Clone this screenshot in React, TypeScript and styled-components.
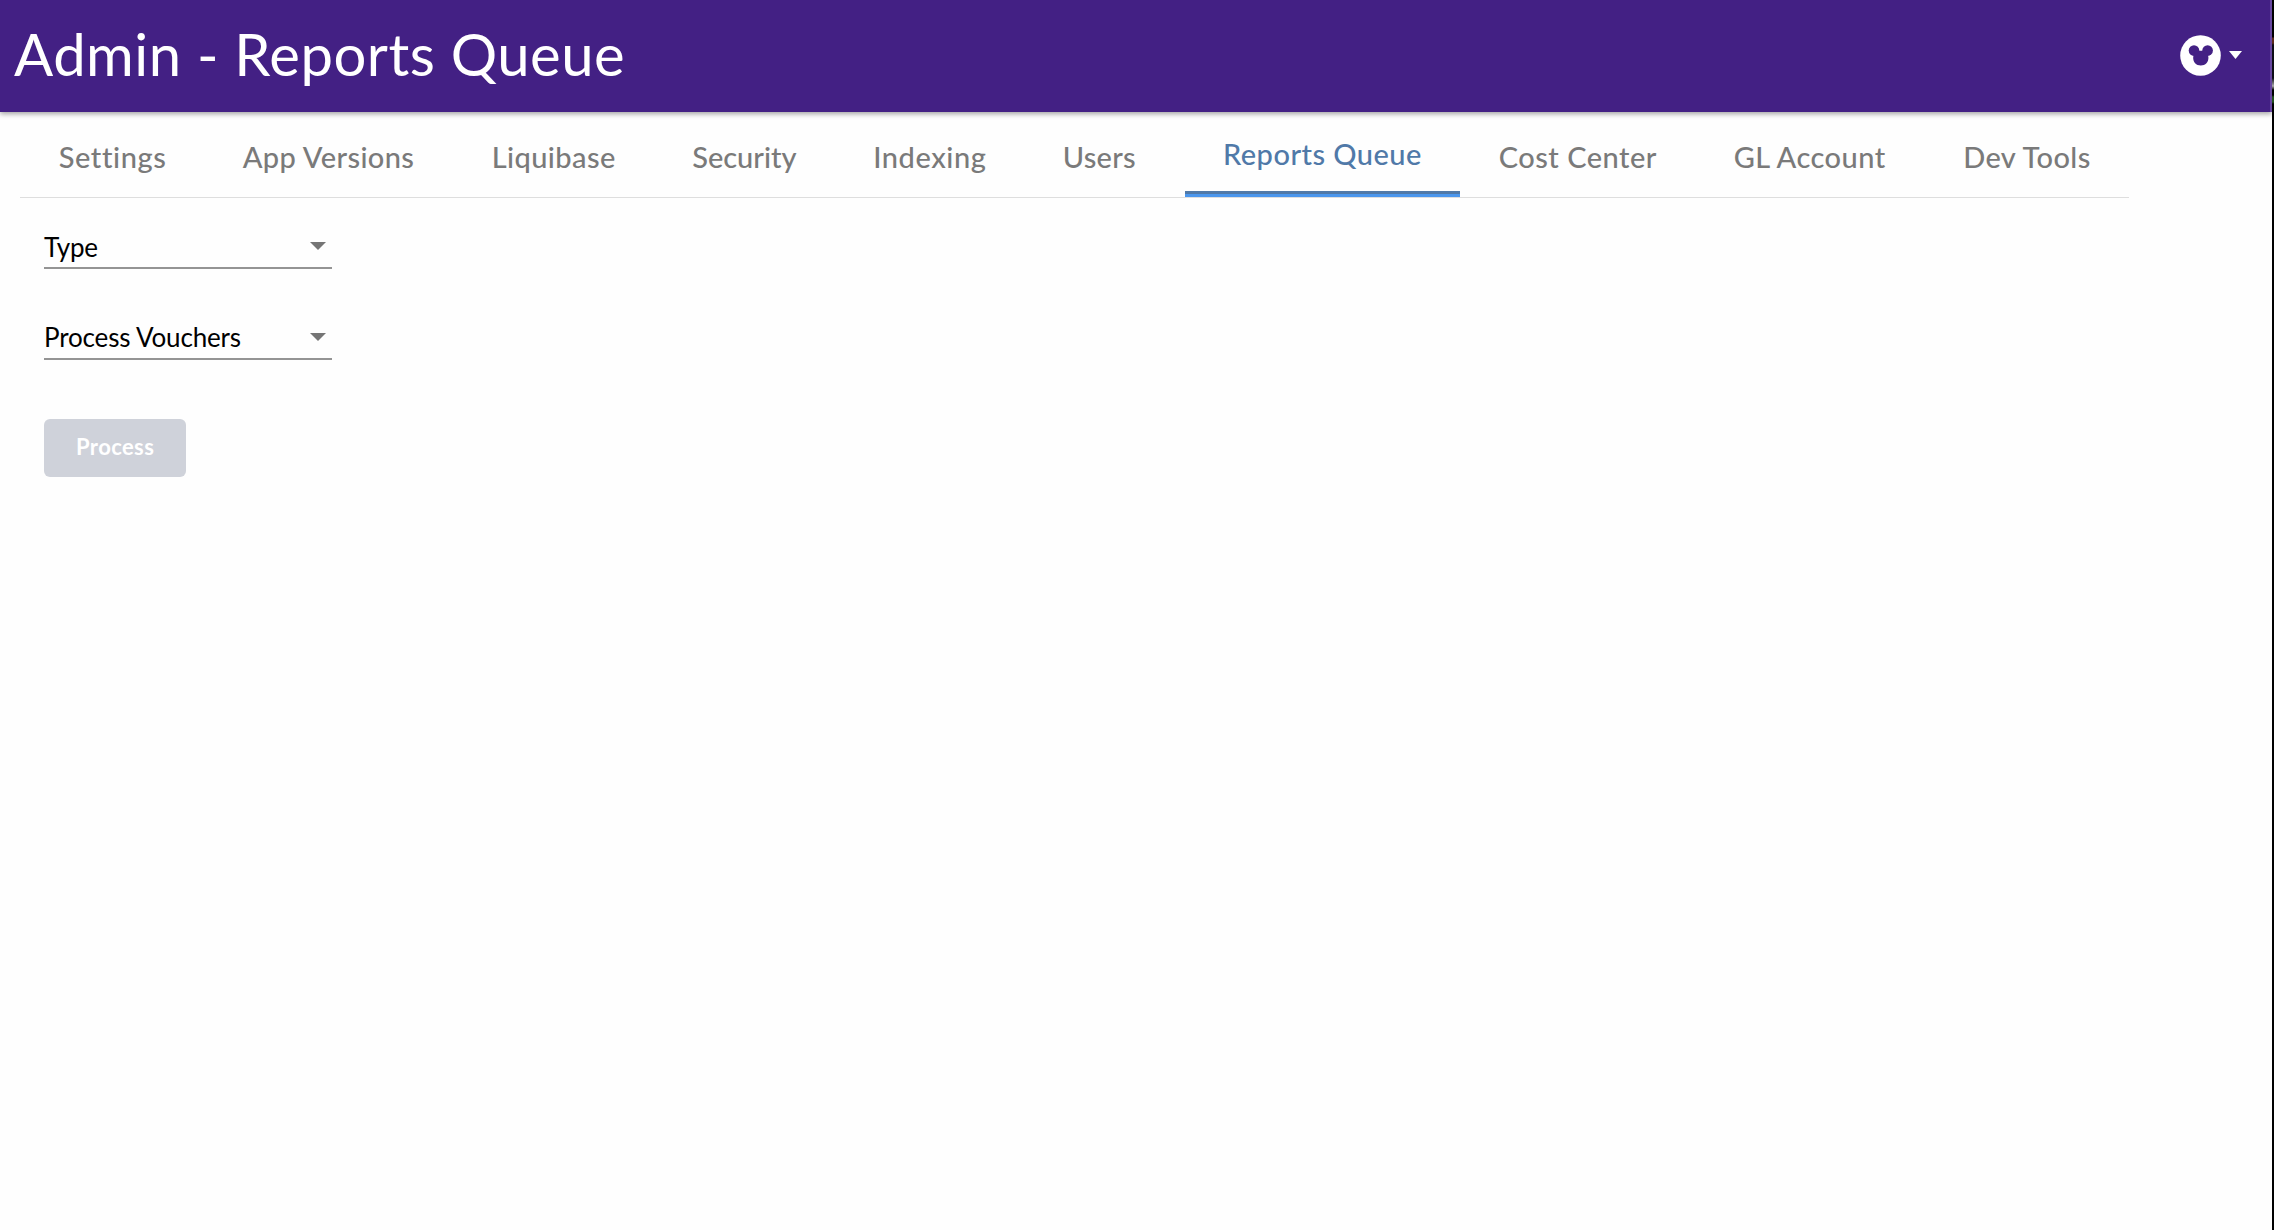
import React from "react";
import styled, { createGlobalStyle } from "styled-components";

const GlobalStyle = createGlobalStyle`
  * { box-sizing: border-box; }
  body {
    margin: 0;
    background: #fefefe;
    font-family: Lato, "Liberation Sans", sans-serif;
    overflow: hidden;
  }
`;

const Screen = styled.div`
  display: flex;
  height: 1230px;
  width: 2274px;
`;

const Page = styled.div`
  flex: 1;
  display: flex;
  flex-direction: column;
`;

const WindowEdge = styled.div`
  width: 2px;
  background: linear-gradient(#000 0 37px, #5d2a1c 38px 43px, #0d0d16 45px 78px, #aaa 86px, #000 90px 95px, #24501f 97px 102px, #000 104px);
`;

const Header = styled.header`
  display: flex;
  justify-content: space-between;
  height: 112px;
  padding: 0 28px 0 14px;
  background: #432084;
  box-shadow: 0 2px 5px rgba(0, 0, 0, 0.36);
  border-right: 2px solid #6747a0;
`;

const Title = styled.h1`
  margin: 0;
  color: #fff;
  font-size: 58px;
  font-weight: 400;
  line-height: 107px;
  letter-spacing: 0.5px;
`;

const UserMenu = styled.button`
  display: flex;
  align-items: center;
  gap: 8px;
  height: 40px;
  margin: 35px 0 0;
  padding: 0;
  border: 0;
  background: none;
`;

const Caret = styled.svg<{ $color: string }>`
  display: block;
  flex: none;
  fill: ${(p) => p.$color};
`;

const Tabs = styled.nav`
  display: flex;
  width: 2109px;
  height: 86px;
  margin-left: 20px;
  border-bottom: 1px solid #dedede;
`;

const Tab = styled.a<{ $width: number; $spacing: number; $active?: boolean }>`
  flex: none;
  width: ${(p) => p.$width}px;
  height: 85px;
  padding-left: ${(p) => (p.$active ? 38 : 38.7)}px;
  font-size: 29px;
  font-weight: 500;
  line-height: ${(p) => (p.$active ? 83 : 90)}px;
  letter-spacing: ${(p) => p.$spacing}px;
  white-space: nowrap;
  color: ${(p) => (p.$active ? "#5079a8" : "#7a7a7a")};
  background: ${(p) =>
    p.$active
      ? "linear-gradient(transparent 79px, #5079a8 79px 82px, #4b96ec 82px)"
      : "none"};
`;

const Form = styled.main`
  display: flex;
  flex-direction: column;
  align-items: flex-start;
  padding: 27px 44px;
`;

const Select = styled.div<{ $line: number; $spacing: number }>`
  display: flex;
  justify-content: space-between;
  width: 288px;
  height: 44px;
  margin-bottom: 47px;
  padding-right: 6px;
  border-bottom: 2px solid #949494;
  color: #000;
  font-size: 26px;
  line-height: ${(p) => p.$line}px;
  letter-spacing: ${(p) => p.$spacing}px;

  svg {
    margin-top: 17px;
  }
`;

const ProcessButton = styled.button`
  width: 142px;
  height: 58px;
  margin-top: 12px;
  padding: 0 0 3px 32px;
  border: 0;
  border-radius: 6px;
  background: #cfd2da;
  color: #fff;
  font: 700 22px/55px Lato, "Liberation Sans", sans-serif;
  letter-spacing: 0.4px;
  text-align: left;
`;

const tabs = [
  { label: "Settings", width: 184, spacing: 0.6 },
  { label: "App Versions", width: 249, spacing: 0.38 },
  { label: "Liquibase", width: 200.5, spacing: 0.42 },
  { label: "Security", width: 181, spacing: 0 },
  { label: "Indexing", width: 189.5, spacing: 0.57 },
  { label: "Users", width: 161, spacing: 0.3 },
  { label: "Reports Queue", width: 275, spacing: 0.47, active: true },
  { label: "Cost Center", width: 235, spacing: 0.5 },
  { label: "GL Account", width: 229.5, spacing: 0.45 },
  { label: "Dev Tools", width: 204.5, spacing: 0.4 },
];

function SelectArrow() {
  return (
    <Caret $color="#757575" width="16" height="8" viewBox="0 0 16 8">
      <path d="M0 0H16L8 8Z" />
    </Caret>
  );
}

export default function App() {
  return (
    <Screen>
      <GlobalStyle />
      <Page>
        <Header>
          <Title>Admin - Reports Queue</Title>
          <UserMenu aria-label="Account">
            <svg width="41" height="41" viewBox="0 0 41 41">
              <circle cx="20.5" cy="20.5" r="20.3" fill="#fff" />
              <g fill="#432084">
                <circle cx="14" cy="15.6" r="5.3" />
                <circle cx="27.6" cy="15.6" r="5.3" />
                <path d="M15 15.5 18 15.7H23.5L26.5 15.5 28.4 22C28.8 27 25.4 30.5 20.8 30.5S12.8 27 13.2 22Z" />
              </g>
            </svg>
            <Caret $color="#fff" width="13" height="8" viewBox="0 0 13 8">
              <path d="M0 0H13L6.5 8Z" />
            </Caret>
          </UserMenu>
        </Header>
        <Tabs>
          {tabs.map((t) => (
            <Tab key={t.label} $width={t.width} $spacing={t.spacing} $active={t.active}>
              {t.label}
            </Tab>
          ))}
        </Tabs>
        <Form>
          <Select $line={44} $spacing={-0.3}>
            Type
            <SelectArrow />
          </Select>
          <Select $line={42} $spacing={-0.15}>
            Process Vouchers
            <SelectArrow />
          </Select>
          <ProcessButton disabled>Process</ProcessButton>
        </Form>
      </Page>
      <WindowEdge />
    </Screen>
  );
}
